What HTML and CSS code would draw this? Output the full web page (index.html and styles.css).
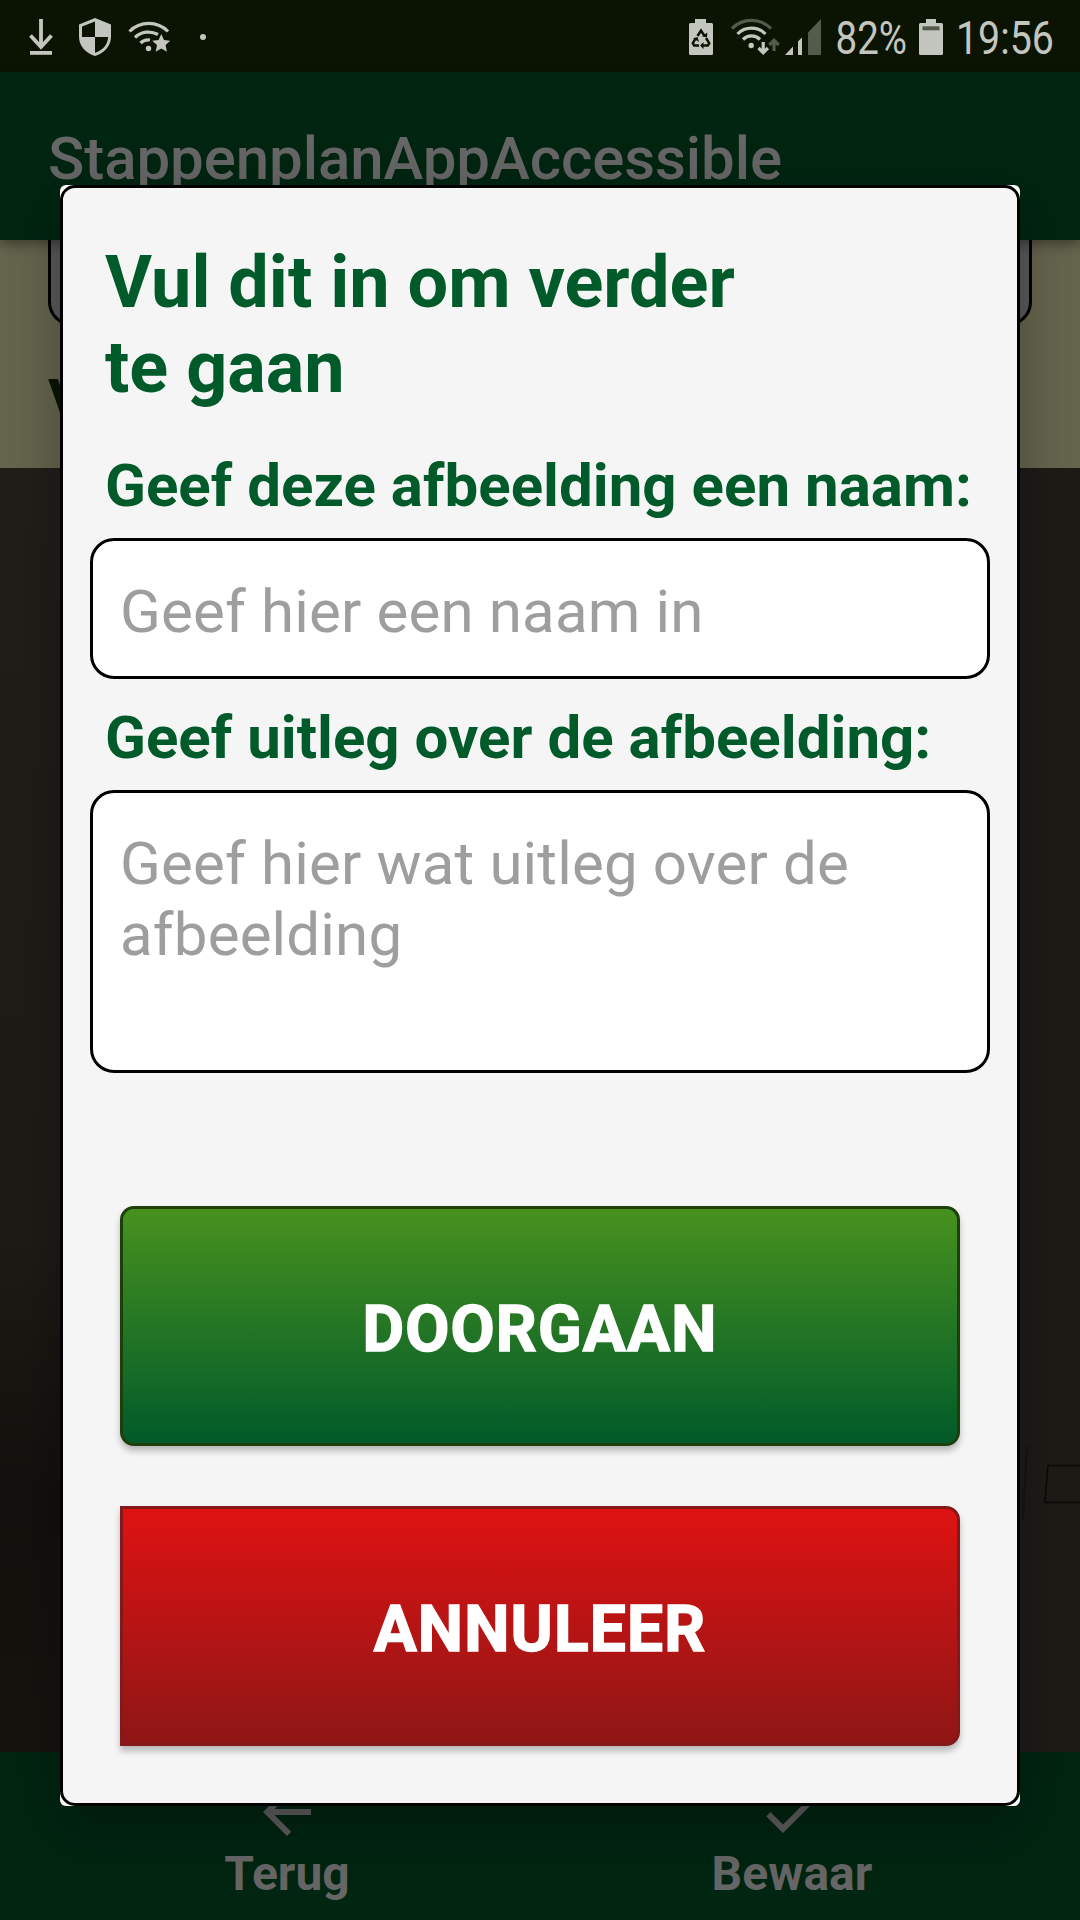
FILE: index.html
```html
<!DOCTYPE html>
<html lang="nl">
<head>
<meta charset="utf-8">
<title>StappenplanAppAccessible</title>
<link rel="stylesheet" href="styles.css">
</head>
<body>
<div class="screen">
  <div class="status-bar">
    <div class="status-group">
      <svg width="24" height="38" viewBox="29 18 24 38"><path d="M41 19v28M30.500 35.500 41 47 51.500 35.500" fill="none" stroke="#c3c6be" stroke-width="3.800"/><path d="M30 51h22v3.800H30z" fill="#c3c6be"/></svg>
      <svg class="icon-shield" width="32" height="38" viewBox="79 18 32 38"><path d="M95 18l16 6.500v12c0 9.500-6.500 16.500-16 19.500-9.500-3-16-10-16-19.500v-12z" fill="#c3c6be"/><path d="M95 21.500V37H82V26.500zM95 37h13.200c-.7 8-5.200 13.200-13.200 15.800z" fill="#0b1402"/></svg>
      <svg class="icon-wifi-star" width="42" height="34" viewBox="128 20 42 34"><g fill="none" stroke="#c3c6be" stroke-width="3.200"><path d="M129.500 31.500a27 27 0 0 1 38.500 0"/><path d="M135 37.500a19.500 19.500 0 0 1 23-3"/><path d="M140.500 43a11 11 0 0 1 9.500-3"/></g><circle cx="148.500" cy="48.500" r="2.700" fill="#c3c6be"/><path d="M161.300 34l2.700 6 6.400.7-4.800 4.400 1.300 6.600-5.600-3.300-5.600 3.300 1.300-6.600-4.800-4.400 6.400-.7z" fill="#c3c6be"/></svg>
      <span class="more-dot"></span>
    </div>
    <div class="status-group">
      <svg width="24" height="36" viewBox="689 19 24 36"><path d="M695 19h11v4h5.500q1.500 0 1.500 1.500v29q0 1.500-1.500 1.500h-21q-1.500 0-1.500-1.500v-29q0-1.500 1.500-1.500H695z" fill="#c3c6be"/><g fill="none" stroke="#0b1402" stroke-width="2.500"><path d="M697.500 36l3.500-5.500 3.200 5M706 38l3.200 5.200-1.400 2.400h-5.300M699 45.600h-4.800l-1.400-2.400 3-5"/></g><path d="M702 36.500l5 .8.300-4.800zM703.500 42v7l-3.500-3.500zM693 38.500l4.500-1.500 1.500 4.800z" fill="#0b1402"/></svg>
      <svg class="icon-wifi" width="49" height="38" viewBox="731 17 49 38"><path d="M732 27.500a27.500 27.500 0 0 1 39 0" fill="none" stroke="#535b4b" stroke-width="3.200"/><g fill="none" stroke="#c3c6be" stroke-width="3.200"><path d="M737.500 33a19.500 19.500 0 0 1 28 0M743 38.500a12 12 0 0 1 17 0"/><path d="M763.200 41v10.500M758.500 47l4.700 4.700 4.700-4.700"/></g><circle cx="751.200" cy="44.500" r="2.700" fill="#c3c6be"/><path d="M774 50V39.500M769.300 44l4.700-4.700 4.700 4.700" fill="none" stroke="#535b4b" stroke-width="3.200"/></svg>
      <svg class="icon-signal" width="36" height="36" viewBox="785 18 36 36"><path d="M785 54l8-8.500V54zM798 54V40.500l4-4V54z" fill="#c3c6be"/><path d="M808 54V31.500L821 18v36z" fill="#535b4b"/></svg>
      <svg class="status-text percent" width="76" height="62" viewBox="-2 0 76 62"><text x="0.500" y="47.500" textLength="71.500" lengthAdjust="spacingAndGlyphs">82%</text></svg>
      <svg class="icon-battery" width="24" height="36" viewBox="919 19 24 36"><path d="M926 19h10v4h5.500q1.500 0 1.500 1.500v29q0 1.500-1.500 1.500h-21q-1.500 0-1.500-1.500v-29q0-1.500 1.500-1.500H926z" fill="#c3c6be"/><path d="M922.500 26.300h17v4h-17z" fill="#535b4b"/></svg>
      <svg class="status-text clock" width="102" height="62" viewBox="-2 0 102 62"><text x="0" y="47.500" textLength="98" lengthAdjust="spacingAndGlyphs">19:56</text></svg>
    </div>
  </div>
  <header class="app-bar">StappenplanAppAccessible</header>
  <main class="page">
    <div class="form">
      <div class="form-field"></div>
      <div class="form-label">V</div>
    </div>
    <div class="photo">
      <svg class="photo-detail" width="60" height="80" viewBox="0 0 60 80" fill="none"><path d="M7 0 3 73" stroke="#171411" stroke-width="2"/><path d="M60 19.500H28L25 56.500H60" stroke="#0a0806" stroke-width="1.500"/></svg>
    </div>
  </main>
  <nav class="bottom-nav">
    <div class="nav-item nav-back">
      <svg width="72" height="72" viewBox="0 0 24 24"><path d="M20 11H7.830l5.590-5.590L12 4l-8 8 8 8 1.410-1.410L7.830 13H20z"/></svg>
      <span>Terug</span>
    </div>
    <div class="nav-item nav-save">
      <svg width="72" height="72" viewBox="0 0 24 24"><path d="M9 16.170 4.830 12l-1.420 1.410L9 19 21 7l-1.410-1.410z"/></svg>
      <span>Bewaar</span>
    </div>
  </nav>
  <div class="dialog">
    <div class="dialog-body">
      <h1 class="dialog-title">Vul dit in om verder<br>te gaan</h1>
      <label class="label">Geef deze afbeelding een naam:</label>
      <div class="input">Geef hier een naam in</div>
      <label class="label label-next">Geef uitleg over de afbeelding:</label>
      <div class="input input-multi">Geef hier wat uitleg over de<br>afbeelding</div>
      <div class="actions">
        <button class="btn btn-confirm">DOORGAAN</button>
        <button class="btn btn-cancel">ANNULEER</button>
      </div>
    </div>
  </div>
</div>
</body>
</html>
```
FILE: styles.css
```css
* { box-sizing: border-box; }

body {
  margin: 0;
  font-family: Roboto, "Liberation Sans", sans-serif;
}

.screen {
  position: relative;
  display: flex;
  flex-direction: column;
  width: 1080px;
  height: 1920px;
  overflow: hidden;
  background: #1b1815;
}

.status-bar {
  display: flex;
  justify-content: space-between;
  height: 72px;
  padding: 2px 24px 0 29px;
  background: #0b1402;
}
.status-group { display: flex; align-items: center; }
.icon-shield { margin-left: 26px; }
.icon-wifi-star { margin-left: 17px; }
.more-dot {
  width: 6px;
  height: 6px;
  margin-left: 30px;
  border-radius: 50%;
  background: #c3c6be;
}
.icon-wifi { margin-left: 18px; }
.icon-signal { margin-left: 5px; }
.percent { margin-left: 12px; }
.icon-battery { margin-left: 10px; }
.clock { margin-left: 11px; }
.status-text { overflow: visible; }
.status-text text { font-size: 46px; fill: #c3c6be; }

.app-bar {
  position: relative;
  height: 168px;
  padding: 52px 0 0 48px;
  font-size: 60px;
  line-height: 70px;
  font-weight: 500;
  letter-spacing: -.08px;
  color: #666;
  background: #002511;
  box-shadow: 0 4px 12px rgba(0, 0, 0, .4);
}

.page { flex: 1; display: flex; flex-direction: column; }
.form { height: 228px; padding: 0 48px; background: #66654e; }
.form-field {
  height: 86px;
  border: 3px solid #000;
  border-top: 0;
  border-radius: 0 0 24px 24px;
  background: #5b5b5b;
}
.form-label {
  padding-top: 40px;
  font-size: 60px;
  line-height: 70px;
  font-weight: 700;
  color: #0b1402;
}
.photo {
  flex: 1;
  display: flex;
  justify-content: flex-end;
  align-items: flex-start;
  padding-top: 978px;
  background: linear-gradient(90deg, transparent 50%, #1e1b17 50%),
    linear-gradient(#211e1a, #1e1b17 60%, #13100d 80%, #16130f);
}

.bottom-nav {
  display: flex;
  height: 168px;
  padding: 24px 37px 0 35px;
  background: #002511;
}
.nav-item {
  flex: 1;
  display: flex;
  flex-direction: column;
  align-items: center;
  font-size: 48px;
  line-height: 52px;
  font-weight: 700;
  color: #666;
}
.nav-item span { padding-left: 1px; }
.nav-save { padding-left: 2px; }
.nav-item svg { fill: #5e5e5e; }

.dialog {
  position: absolute;
  left: 60px;
  top: 185px;
  width: 960px;
  height: 1621px;
  border-radius: 6px;
  background: #fff;
  box-shadow: 0 20px 60px rgba(0, 0, 0, .3);
}
.dialog-body {
  height: 100%;
  padding: 53px 27px 0;
  border: 3px solid #000;
  border-radius: 15px;
  background: #f5f5f5;
}
.dialog-title {
  margin: 0 15px 40.200px;
  font-size: 72px;
  line-height: 84.800px;
  font-weight: 700;
  color: #005a2a;
}
.label {
  display: block;
  height: 70px;
  margin: 0 15px 17px;
  font-size: 60px;
  line-height: 70px;
  font-weight: 700;
  white-space: nowrap;
  letter-spacing: .02px;
  color: #005a2a;
}
.label-next { margin-top: 24px; }
.input {
  height: 141px;
  padding: 35.500px 27px;
  border: 3px solid #000;
  border-radius: 24px;
  background: #fff;
  font-size: 60px;
  line-height: 71px;
  letter-spacing: .16px;
  color: #9e9e9e;
  white-space: nowrap;
}
.input-multi { height: 283px; }

.actions {
  display: flex;
  flex-direction: column;
  gap: 60px;
  margin: 133px 30px 0;
}
.btn {
  height: 240px;
  padding: 9px 0 0;
  font: 700 64px/1 Roboto, "Liberation Sans", sans-serif;
  letter-spacing: 1.200px;
  color: #fff;
  -webkit-text-stroke: 1.500px #fff;
  background-origin: border-box;
  box-shadow: 0 5px 6px rgba(0, 0, 0, .25);
}
.btn-confirm {
  border: 3px solid #1e3f0b;
  border-radius: 14px;
  background-image: linear-gradient(#48921e, #005a2a);
}
.btn-cancel {
  border: 3px solid #84181a;
  border-radius: 0 14px 14px 0;
  background-image: linear-gradient(#e01212, #8e1616);
}
```
